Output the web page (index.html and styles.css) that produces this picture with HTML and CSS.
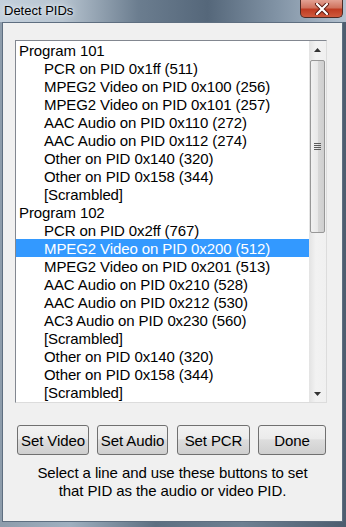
FILE: index.html
```html
<!DOCTYPE html>
<html lang="en">
<head>
  <meta charset="UTF-8">
  <title>Detect PIDs</title>
  <link rel="stylesheet" href="styles.css">
</head>
<body>
  <div class="window">
    <div class="titlebar">
      <span class="title">Detect PIDs</span>
      <div class="close">
        <svg width="16" height="12" viewBox="0 0 16 12">
          <path d="M3 1 L13 11 M13 1 L3 11" stroke="#5a1a12" stroke-width="4" stroke-linecap="round"/>
          <path d="M3 1 L13 11 M13 1 L3 11" stroke="#fff" stroke-width="2.2" stroke-linecap="round"/>
        </svg>
      </div>
    </div>

    <div class="client">
      <div class="listbox">
        <ul class="items">
          <li class="program">Program 101</li>
          <li>PCR on PID 0x1ff (511)</li>
          <li>MPEG2 Video on PID 0x100 (256)</li>
          <li>MPEG2 Video on PID 0x101 (257)</li>
          <li>AAC Audio on PID 0x110 (272)</li>
          <li>AAC Audio on PID 0x112 (274)</li>
          <li>Other on PID 0x140 (320)</li>
          <li>Other on PID 0x158 (344)</li>
          <li>[Scrambled]</li>
          <li class="program">Program 102</li>
          <li>PCR on PID 0x2ff (767)</li>
          <li class="selected">MPEG2 Video on PID 0x200 (512)</li>
          <li>MPEG2 Video on PID 0x201 (513)</li>
          <li>AAC Audio on PID 0x210 (528)</li>
          <li>AAC Audio on PID 0x212 (530)</li>
          <li>AC3 Audio on PID 0x230 (560)</li>
          <li>[Scrambled]</li>
          <li>Other on PID 0x140 (320)</li>
          <li>Other on PID 0x158 (344)</li>
          <li>[Scrambled]</li>
        </ul>
        <div class="scrollbar">
          <div class="arrow up">
            <svg width="7" height="4" viewBox="0 0 7 4"><path d="M0 4 L3.5 0 L7 4 Z" fill="#333"/></svg>
          </div>
          <div class="track">
            <div class="thumb">
              <div class="grip"><span></span><span></span><span></span><span></span></div>
            </div>
          </div>
          <div class="arrow down">
            <svg width="7" height="4" viewBox="0 0 7 4"><path d="M0 0 L7 0 L3.5 4 Z" fill="#333"/></svg>
          </div>
        </div>
      </div>

      <div class="buttons">
        <button class="btn">Set Video</button>
        <button class="btn">Set Audio</button>
        <button class="btn">Set PCR</button>
        <button class="btn">Done</button>
      </div>

      <p class="hint">Select a line and use these buttons to set<br>that PID as the audio or video PID.</p>
    </div>
  </div>
</body>
</html>
```

FILE: styles.css
```css
body {
  margin: 0;
  background: #4a5a6c;
}
.window {
  width: 346px;
  height: 527px;
  box-sizing: border-box;
  background: linear-gradient(90deg, #8d9cab 0%, #9fb0c0 20%, #5d6f81 45%, #6e8092 70%, #4d5d6f 100%);
  display: flex;
  flex-direction: column;
  font-family: "Liberation Sans", Arial, sans-serif;
}
.titlebar {
  height: 22px;
  display: flex;
  justify-content: space-between;
  align-items: flex-start;
  background: linear-gradient(90deg, #c4d0dc 0%, #b7c4d0 18%, #6b7d8f 40%, #55677a 60%, #8193a5 80%, #b2c0ce 100%);
}
.title {
  font-size: 13px;
  color: #000;
  padding: 3px 0 0 4px;
  text-shadow: 0 0 6px #e8eef4, 0 0 3px #e8eef4;
}
.close {
  width: 43px;
  height: 18px;
  margin-right: 3px;
  box-sizing: border-box;
  border: 1px solid #4d2a25;
  border-top: none;
  border-radius: 0 0 5px 5px;
  background: linear-gradient(180deg, #e3a193 0%, #d0735f 45%, #bf3b22 55%, #cf5a3e 100%);
  display: flex;
  align-items: center;
  justify-content: center;
}
.client {
  flex: 1;
  margin: 0 3px 5px 2px;
  background: #f0f0f0;
  border: 1px solid #5e6e80;
  padding: 17px 0 0 12px;
  display: flex;
  flex-direction: column;
}
.listbox {
  width: 312px;
  height: 363px;
  box-sizing: border-box;
  border: 1px solid #828790;
  border-right-color: #dcdcdc;
  border-bottom-color: #dcdcdc;
  background: #fff;
  display: flex;
}
.items {
  list-style: none;
  margin: 0;
  padding: 0;
  flex: 1;
  font-size: 15px;
  letter-spacing: -0.1px;
  color: #000;
}
.items li {
  height: 18px;
  line-height: 20px;
  padding-left: 28px;
  white-space: nowrap;
}
.items li.program {
  padding-left: 3px;
}
.items li.selected {
  background: #3399ff;
  color: #fff;
}
.scrollbar {
  width: 17px;
  background: linear-gradient(90deg, #e3e3e3, #f2f2f2 40%, #f0f0f0);
  display: flex;
  flex-direction: column;
}
.arrow {
  height: 17px;
  display: flex;
  align-items: center;
  justify-content: center;
}
.track {
  flex: 1;
  padding: 2px 0;
}
.thumb {
  height: 173px;
  margin: 0 1px;
  box-sizing: border-box;
  border: 1px solid #979797;
  border-radius: 2px;
  background: linear-gradient(90deg, #f1f1f1, #e8e8e8 50%, #d8d8d8 51%, #cfcfcf);
  display: flex;
  align-items: center;
  justify-content: center;
}
.grip {
  display: flex;
  flex-direction: column;
  gap: 1px;
}
.grip span {
  width: 7px;
  height: 1px;
  background: #5a5a5a;
}
.buttons {
  display: flex;
  margin-top: 22px;
  margin-left: 2px;
}
.btn {
  height: 30px;
  box-sizing: border-box;
  border: 1px solid #707070;
  border-radius: 3px;
  background: linear-gradient(180deg, #f2f2f2 0%, #ebebeb 45%, #dddddd 50%, #cfcfcf 100%);
  font-family: "Liberation Sans", Arial, sans-serif;
  font-size: 15px;
  letter-spacing: -0.1px;
  color: #000;
  padding: 0;
}
.btn:nth-child(1) { width: 72px; margin-right: 8px; }
.btn:nth-child(2) { width: 71px; margin-right: 9px; }
.btn:nth-child(3) { width: 73px; margin-right: 8px; }
.btn:nth-child(4) { width: 68px; }
.hint {
  margin: 9px 0 0 -12px;
  text-align: center;
  font-size: 15px;
  letter-spacing: -0.1px;
  line-height: 18px;
  color: #000;
}
```
